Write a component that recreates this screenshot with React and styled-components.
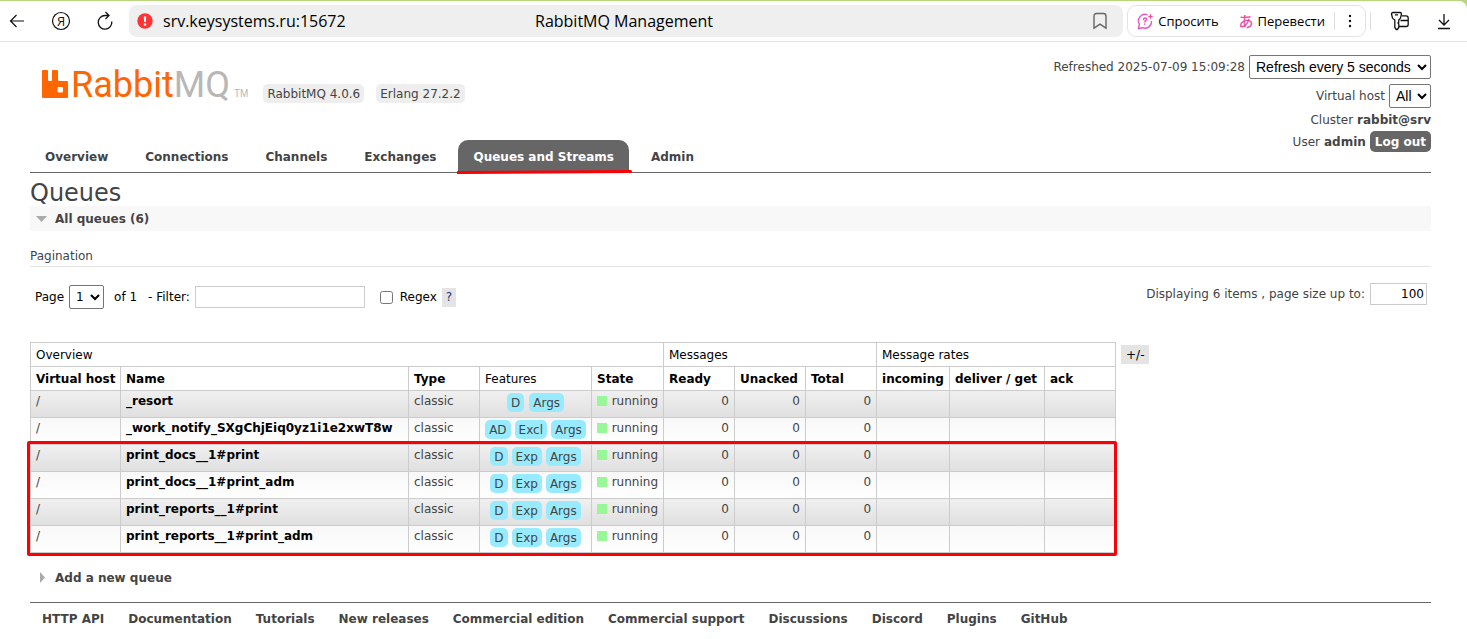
import React, { useState } from "react";
import styled, { createGlobalStyle } from "styled-components";

const GlobalStyle = createGlobalStyle`
	* {
		box-sizing: border-box;
	}

	body {
		margin: 0;
		background: #ffffff;
		color: #444444;
		font-family: Verdana, "DejaVu Sans", sans-serif;
		font-size: 12px;
		line-height: 16px;
	}

	a {
		color: inherit;
		text-decoration: none;
	}
`;

/* browser bar */

const BrowserFrame = styled.div`
	background: #b8d47c;
	padding-top: 1px;
`;

const BrowserBar = styled.div`
	display: flex;
	align-items: center;
	height: 41px;
	background: #ffffff;
	border-bottom: 1px solid #e3e3e3;
	border-radius: 0 8px 0 0;
	padding: 0 12px 0 6px;
	color: #000000;
	font-family: "Open Sans", sans-serif;
`;

const IconButton = styled.button`
	display: flex;
	align-items: center;
	justify-content: center;
	flex: none;
	width: ${(props) => props.$width || 22}px;
	height: 32px;
	padding: 0;
	border: 0;
	background: none;
	color: #111111;
`;

const NavButtons = styled.div`
	display: flex;
	gap: 22px;
	margin-right: 13px;
`;

const AddressBar = styled.div`
	display: flex;
	align-items: center;
	flex: 1;
	height: 32px;
	background: #efefef;
	border-radius: 8px;
	padding: 0 13px 0 8px;
	font-size: 16px;
	line-height: 24px;
`;

const Address = styled.a`
	width: 372px;
	margin-left: 10px;
`;

const PageTitle = styled.span`
	flex: 1;
`;

const Assistant = styled.div`
	display: flex;
	align-items: center;
	height: 32px;
	margin-left: 4px;
	border: 1px solid #e3e3e3;
	border-radius: 9px;
	padding-left: 9px;
`;

const AssistantButton = styled.button`
	display: flex;
	align-items: center;
	gap: 4px;
	height: 28px;
	padding: 0;
	margin-right: ${(props) => props.$after}px;
	border: 0;
	background: none;
	color: #000000;
	font-family: "Open Sans", sans-serif;
	font-size: 13px;
`;

const Kana = styled.span`
	color: #ee4fa5;
	font-family: "Noto Sans CJK JP", sans-serif;
	font-size: 15px;
	font-weight: 500;
	line-height: 16px;
`;

const Separator = styled.span`
	width: 1px;
	height: 18px;
	background: #dddddd;
`;

const BarTools = styled.div`
	display: flex;
	align-items: center;
	margin-left: 4px;
`;

const ToolIcons = styled.div`
	display: flex;
	gap: 22px;
	margin-left: 18px;
`;

/* page */

const Page = styled.div`
	padding: 0 36px 0 30px;
`;

const Header = styled.header`
	display: flex;
	justify-content: space-between;
	height: 131px;
	border-bottom: 1px solid #666666;
`;

const Brand = styled.div`
	display: flex;
	flex-direction: column;
	justify-content: space-between;
`;

const LogoRow = styled.div`
	display: flex;
	align-items: flex-end;
	gap: 12px;
	padding: 26px 0 0 12px;
`;

const Logo = styled.a`
	display: flex;
	align-items: flex-end;
	height: 35px;
	margin-right: 3px;
	color: #ff6600;
	font-family: Roboto, sans-serif;
	font-size: 36px;
	line-height: 36px;

	svg {
		margin: 0 1px 5px 0;
	}

	span {
		color: #b7b7b7;
	}

	small {
		margin-left: 4px;
		color: #b7b7b7;
		font-family: "Liberation Sans", sans-serif;
		font-size: 10px;
		line-height: 18px;
	}
`;

const Version = styled.span`
	height: 19px;
	padding: 2px 4px 1px;
	border-radius: 5px;
	background: #eeeeee;
	white-space: nowrap;
`;

const Tabs = styled.nav`
	display: flex;
	gap: 7px;
`;

const Tab = styled.a`
	position: relative;
	padding: 9px 15px 7px;
	border-radius: 10px 10px 0 0;
	font-weight: bold;
	white-space: nowrap;
	background: ${(props) => (props.$active ? "#666666" : "none")};
	color: ${(props) => (props.$active ? "#ffffff" : "#444444")};
`;

const TabMark = styled.svg`
	position: absolute;
	left: -1px;
	bottom: -2px;
	width: calc(100% + 4px);
	height: 4px;
`;

const Status = styled.div`
	display: flex;
	flex-direction: column;
	align-items: flex-end;
	padding-top: 13px;
`;

const StatusLine = styled.div`
	display: flex;
	align-items: center;
	gap: 4px;
	height: ${(props) => props.$height}px;
	margin-bottom: ${(props) => props.$after || 0}px;
	white-space: nowrap;
`;

const Select = styled.select`
	width: ${(props) => props.$width}px;
	height: 24px;
	padding: 0 2px;
	border: 1px solid #767676;
	border-radius: 2px;
	background-color: #ffffff;
	color: #000000;
	font-family: ${(props) =>
		props.$verdana ? 'Verdana, "DejaVu Sans"' : 'Arial, "Liberation Sans"'}, sans-serif;
	font-size: ${(props) => (props.$verdana ? 12 : 14)}px;
`;

const LogoutButton = styled.button`
	height: 21px;
	padding: 0 5px;
	border: 0;
	border-radius: 5px;
	background: #666666;
	color: #ffffff;
	font: inherit;
	font-weight: bold;
`;

const Title = styled.h1`
	margin: 7px 0 0;
	font-size: 24px;
	font-weight: normal;
	line-height: 26px;
`;

const SectionTitle = styled.h2`
	display: flex;
	align-items: center;
	height: 25px;
	margin: 0;
	padding-left: 6px;
	background: ${(props) => (props.$open ? "#f8f8f8" : "none")};
	font-size: 12px;
	font-weight: bold;

	svg {
		margin-right: 8px;
	}
`;

const SubTitle = styled.h3`
	margin: 17px 0 16px;
	padding-bottom: 2px;
	border-bottom: 1px solid #e4e4e4;
	font-size: 12px;
	font-weight: normal;
`;

const Pagination = styled.div`
	display: flex;
	justify-content: space-between;
	padding: 0 4px 31px 5px;
`;

const Controls = styled.div`
	display: flex;
	align-items: center;
	gap: 5px;
	height: 28px;
	color: #000000;
`;

const PageCount = styled.span`
	margin: 0 6px 0 5px;
`;

const TextInput = styled.input`
	width: ${(props) => props.$width}px;
	height: 22px;
	padding: 2px;
	border: 1px solid #cccccc;
	font: inherit;
	text-align: ${(props) => props.$align || "left"};
`;

const Regex = styled.label`
	display: flex;
	align-items: center;
	gap: 7px;
	margin-left: 10px;

	input {
		width: 13px;
		height: 13px;
		margin: 0;
	}
`;

const SmallButton = styled.button`
	height: 19px;
	padding: 0 ${(props) => props.$pad}px;
	border: 0;
	background: #e4e4e4;
	color: ${(props) => props.$color || "#000000"};
	font: inherit;
`;

const PageSize = styled.div`
	display: flex;
	align-items: center;
	gap: 5px;
	height: 22px;
`;

const TableRow = styled.div`
	display: flex;
	align-items: flex-start;
	gap: 5px;
`;

const TableWrap = styled.div`
	position: relative;
`;

const Highlight = styled.div`
	position: absolute;
	left: -3px;
	right: -1px;
	bottom: -3px;
	height: 115px;
	border: 3px solid #fb0007;
	border-radius: 2px;
	pointer-events: none;
`;

const ToggleColumns = styled.div`
	padding-top: 3px;
`;

const Table = styled.table`
	width: 1086px;
	border-collapse: collapse;
	table-layout: fixed;
	white-space: nowrap;

	th,
	td {
		border: 1px solid #cccccc;
		padding: 0 5px;
		text-align: left;
	}

	th {
		height: 24px;
		color: #000000;
	}

	td {
		height: 27px;
		padding-top: 2px;
		vertical-align: top;
	}
`;

const HeadCell = styled.th`
	font-weight: ${(props) => (props.$plain ? "normal" : "bold")};
`;

const Row = styled.tr`
	background: ${(props) =>
		props.$alt
			? "linear-gradient(#f0f0f0, #dfdfdf)"
			: "linear-gradient(#f8f8f8, #ffffff)"};

	td:nth-child(2) {
		color: #000000;
		font-weight: bold;
	}

	td:nth-child(n + 6) {
		text-align: right;
	}
`;

const Features = styled.div`
	display: flex;
	justify-content: center;
	gap: ${(props) => (props.$wide ? 5 : 4)}px;
`;

const Feature = styled.abbr`
	height: 19px;
	padding: 2px 4px 1px;
	border-radius: 5px;
	background: #98ebff;
`;

const State = styled.div`
	display: flex;
	align-items: center;
	gap: 5px;

	&::before {
		content: "";
		width: 10px;
		height: 10px;
		background: #98f898;
	}
`;

const AddQueue = styled.div`
	margin-top: 12px;
`;

const Footer = styled.footer`
	display: flex;
	gap: 24px;
	margin-top: 12px;
	padding: 8px 12px;
	border-top: 1px solid #666666;
	font-weight: bold;
	white-space: nowrap;
`;

const tabs = [
	"Overview",
	"Connections",
	"Channels",
	"Exchanges",
	"Queues and Streams",
	"Admin",
];

const columnWidths = [90, 288, 71, 112, 72, 71, 71, 71, 73, 95, 71];

const columns = [
	"Virtual host",
	"Name",
	"Type",
	"Features",
	"State",
	"Ready",
	"Unacked",
	"Total",
	"incoming",
	"deliver / get",
	"ack",
];

const queues = [
	{ name: "_resort", features: ["D", "Args"] },
	{ name: "_work_notify_SXgChjEiq0yz1i1e2xwT8w", features: ["AD", "Excl", "Args"] },
	{ name: "print_docs__1#print", features: ["D", "Exp", "Args"] },
	{ name: "print_docs__1#print_adm", features: ["D", "Exp", "Args"] },
	{ name: "print_reports__1#print", features: ["D", "Exp", "Args"] },
	{ name: "print_reports__1#print_adm", features: ["D", "Exp", "Args"] },
];

const footerLinks = [
	"HTTP API",
	"Documentation",
	"Tutorials",
	"New releases",
	"Commercial edition",
	"Commercial support",
	"Discussions",
	"Discord",
	"Plugins",
	"GitHub",
];

const Browser = () => (
	<BrowserFrame>
		<BrowserBar>
			<NavButtons>
				<IconButton aria-label="Back">
					<svg width="16" height="14" viewBox="0 0 16 14" fill="none" stroke="currentColor" strokeWidth="1.2">
						<path d="M15 7H2M7.500 1L1.500 7l6 6" />
					</svg>
				</IconButton>
				<IconButton aria-label="Yandex">
					<svg width="20" height="20" viewBox="0 0 20 20" fill="none" stroke="currentColor" strokeWidth="1.2">
						<circle cx="10" cy="10" r="8.500" />
						<text x="10" y="14.500" textAnchor="middle" fontSize="13" fontFamily="Open Sans" fill="currentColor" stroke="none">
							Я
						</text>
					</svg>
				</IconButton>
				<IconButton aria-label="Reload">
					<svg width="18" height="20" viewBox="0 0 18 20" fill="none" stroke="currentColor" strokeWidth="1.3">
						<path d="M15.800 10.500A6.800 6.800 0 1 1 9 4.500h3.500M9.500 1l3.500 3.500L9.500 8" />
					</svg>
				</IconButton>
			</NavButtons>
			<AddressBar>
				<svg width="16" height="16" viewBox="0 0 16 16">
					<circle cx="8" cy="8" r="7.700" fill="#ff3333" />
					<path d="M6.800 3.500h2.400L8.900 9H7.100z" fill="#fff" />
					<circle cx="8" cy="11.500" r="1.300" fill="#fff" />
				</svg>
				<Address href="#">srv.keysystems.ru:15672</Address>
				<PageTitle>RabbitMQ Management</PageTitle>
				<svg width="20" height="18" viewBox="0 0 20 18" fill="none" stroke="#666" strokeWidth="1.400">
					<path d="M4 16.200V4.200Q4 1.500 6.500 1.500h7q2.500 0 2.500 2.700v12L10 12.200z" />
				</svg>
			</AddressBar>
			<Assistant>
				<AssistantButton $after={20}>
					<svg width="17" height="17" viewBox="0 0 17 17" fill="none" stroke="#e755c4" strokeWidth="1.400" strokeLinecap="round">
						<path d="M10 1.700A6.500 6.500 0 0 0 2.400 11.200L1.500 15.500l4-.8A6.500 6.500 0 0 0 14.500 8.500" />
						<path d="M6.500 6.500Q6.700 4.900 8.300 5q1.600.200 1.200 1.700Q9.200 7.400 8 8v1M7.700 11v.2" />
						<path d="M13.500.5l.8 2.200 2.200.8-2.200.8-.8 2.200-.8-2.200-2.200-.8 2.200-.8z" fill="#f04b9f" stroke="none" />
					</svg>
					Спросить
				</AssistantButton>
				<AssistantButton $after={9}>
					<Kana>あ</Kana>
					Перевести
				</AssistantButton>
				<Separator />
				<IconButton aria-label="More" $width={30}>
					<svg width="4" height="14" viewBox="0 0 4 14" fill="currentColor">
						<circle cx="2" cy="2" r="1.200" />
						<circle cx="2" cy="7" r="1.200" />
						<circle cx="2" cy="12" r="1.200" />
					</svg>
				</IconButton>
			</Assistant>
			<BarTools>
				<Separator />
				<ToolIcons>
					<IconButton aria-label="Passwords">
						<svg width="20" height="20" viewBox="0 0 20 20" fill="none" stroke="currentColor" strokeWidth="1.300" strokeLinejoin="round">
							<path d="M3 1.500h7q1.500 0 1.500 1.500L10.500 7Q10 8.200 8.800 8.800V11l-.8 1 .8 1v3.500l-1.500 2h-1l-1.500-2V8.800Q3.200 8.200 2.500 7L1.500 3Q1.500 1.500 3 1.500zM5 3.800h3" />
							<path d="M12 4.800h4q2.200 0 2.200 2.200v6.500q0 2-2 2H9M10.500 9.500h7.700" />
						</svg>
					</IconButton>
					<IconButton aria-label="Downloads">
						<svg width="16" height="18" viewBox="0 0 16 18" fill="none" stroke="currentColor" strokeWidth="1.300">
							<path d="M8 2v11M3 8l5 5 5-5M2 16.500h12" />
						</svg>
					</IconButton>
				</ToolIcons>
			</BarTools>
		</BrowserBar>
	</BrowserFrame>
);

const App = () => {
	const [filter, setFilter] = useState("");
	const [pageSize, setPageSize] = useState("100");

	return (
		<>
			<GlobalStyle />
			<Browser />
			<Page>
				<Header>
					<Brand>
						<LogoRow>
							<Logo href="#">
								<svg width="28" height="28" viewBox="0 0 28 28">
									<path
										fill="#ff6600"
										fillRule="evenodd"
										d="M1 0h4q1 0 1 1v9q0 1 1 1h2q1 0 1-1V1q0-1 1-1h4q1 0 1 1v9q0 1 1 1H25q1 0 1 1v15q0 1-1 1H1q-1 0-1-1V1q0-1 1-1zM16.500 17q-1 0-1 1v3.500q0 1 1 1H20q1 0 1-1V18q0-1-1-1z"
									/>
								</svg>
								Rabbit<span>MQ</span>
								<small>TM</small>
							</Logo>
							<Version>RabbitMQ 4.0.6</Version>
							<Version>Erlang 27.2.2</Version>
						</LogoRow>
						<Tabs>
							{tabs.map((tab) => {
								const active = tab === "Queues and Streams";
								return (
									<Tab href="#" key={tab} $active={active}>
										{tab}
										{active && (
											<TabMark viewBox="0 0 174 4" preserveAspectRatio="none">
												<path d="M1 2.500L173 1.500" stroke="#fb0007" strokeWidth="3" strokeLinecap="round" />
											</TabMark>
										)}
									</Tab>
								);
							})}
						</Tabs>
					</Brand>
					<Status>
						<StatusLine $height={24} $after={4}>
							<label htmlFor="refresh">Refreshed 2025-07-09 15:09:28</label>
							<Select id="refresh" $width={182}>
								<option>Refresh every 5 seconds</option>
							</Select>
						</StatusLine>
						<StatusLine $height={25} $after={1}>
							<label htmlFor="vhost">Virtual host</label>
							<Select id="vhost" $width={42}>
								<option>All</option>
							</Select>
						</StatusLine>
						<StatusLine $height={22}>
							Cluster <b>rabbit@srv</b>
						</StatusLine>
						<StatusLine $height={21}>
							User <b>admin</b> <LogoutButton>Log out</LogoutButton>
						</StatusLine>
					</Status>
				</Header>

				<Title>Queues</Title>
				<SectionTitle $open>
					<svg width="11" height="6" viewBox="0 0 11 6">
						<path d="M0 0h11L5.500 6z" fill="#aaa" />
					</svg>
					All queues (6)
				</SectionTitle>
				<SubTitle>Pagination</SubTitle>
				<Pagination>
					<Controls>
						<label htmlFor="page">Page</label>
						<Select id="page" $width={35} $verdana>
							<option>1</option>
						</Select>
						<PageCount>of 1</PageCount>
						<label htmlFor="filter">- Filter:</label>
						<TextInput
							id="filter"
							$width={170}
							value={filter}
							onChange={(e) => setFilter(e.target.value)}
						/>
						<Regex>
							<input type="checkbox" />
							Regex
						</Regex>
						<SmallButton $pad={4} $color="#223377">
							?
						</SmallButton>
					</Controls>
					<PageSize>
						<label htmlFor="pagesize">Displaying 6 items , page size up to:</label>
						<TextInput
							id="pagesize"
							$width={57}
							$align="right"
							value={pageSize}
							onChange={(e) => setPageSize(e.target.value)}
						/>
					</PageSize>
				</Pagination>

				<TableRow>
					<TableWrap>
						<Table>
							<colgroup>
								{columnWidths.map((width, i) => (
									<col key={i} width={width} />
								))}
							</colgroup>
							<thead>
								<tr>
									<HeadCell $plain colSpan={5}>
										Overview
									</HeadCell>
									<HeadCell $plain colSpan={3}>
										Messages
									</HeadCell>
									<HeadCell $plain colSpan={3}>
										Message rates
									</HeadCell>
								</tr>
								<tr>
									{columns.map((column) => (
										<HeadCell key={column} $plain={column === "Features"}>
											{column}
										</HeadCell>
									))}
								</tr>
							</thead>
							<tbody>
								{queues.map((queue, i) => (
									<Row key={queue.name} $alt={i % 2 === 0}>
										<td>/</td>
										<td>
											<a href="#">{queue.name}</a>
										</td>
										<td>classic</td>
										<td>
											<Features $wide={queue.features.length < 3}>
												{queue.features.map((feature) => (
													<Feature key={feature}>{feature}</Feature>
												))}
											</Features>
										</td>
										<td>
											<State>running</State>
										</td>
										<td>0</td>
										<td>0</td>
										<td>0</td>
										<td />
										<td />
										<td />
									</Row>
								))}
							</tbody>
						</Table>
						<Highlight />
					</TableWrap>
					<ToggleColumns>
						<SmallButton $pad={5}>+/-</SmallButton>
					</ToggleColumns>
				</TableRow>

				<AddQueue>
					<SectionTitle>
						<svg width="11" height="11" viewBox="0 0 11 11">
							<path d="M4 0v11l5-5.500z" fill="#aaa" />
						</svg>
						Add a new queue
					</SectionTitle>
				</AddQueue>
				<Footer>
					{footerLinks.map((link) => (
						<a href="#" key={link}>
							{link}
						</a>
					))}
				</Footer>
			</Page>
		</>
	);
};

export default App;
